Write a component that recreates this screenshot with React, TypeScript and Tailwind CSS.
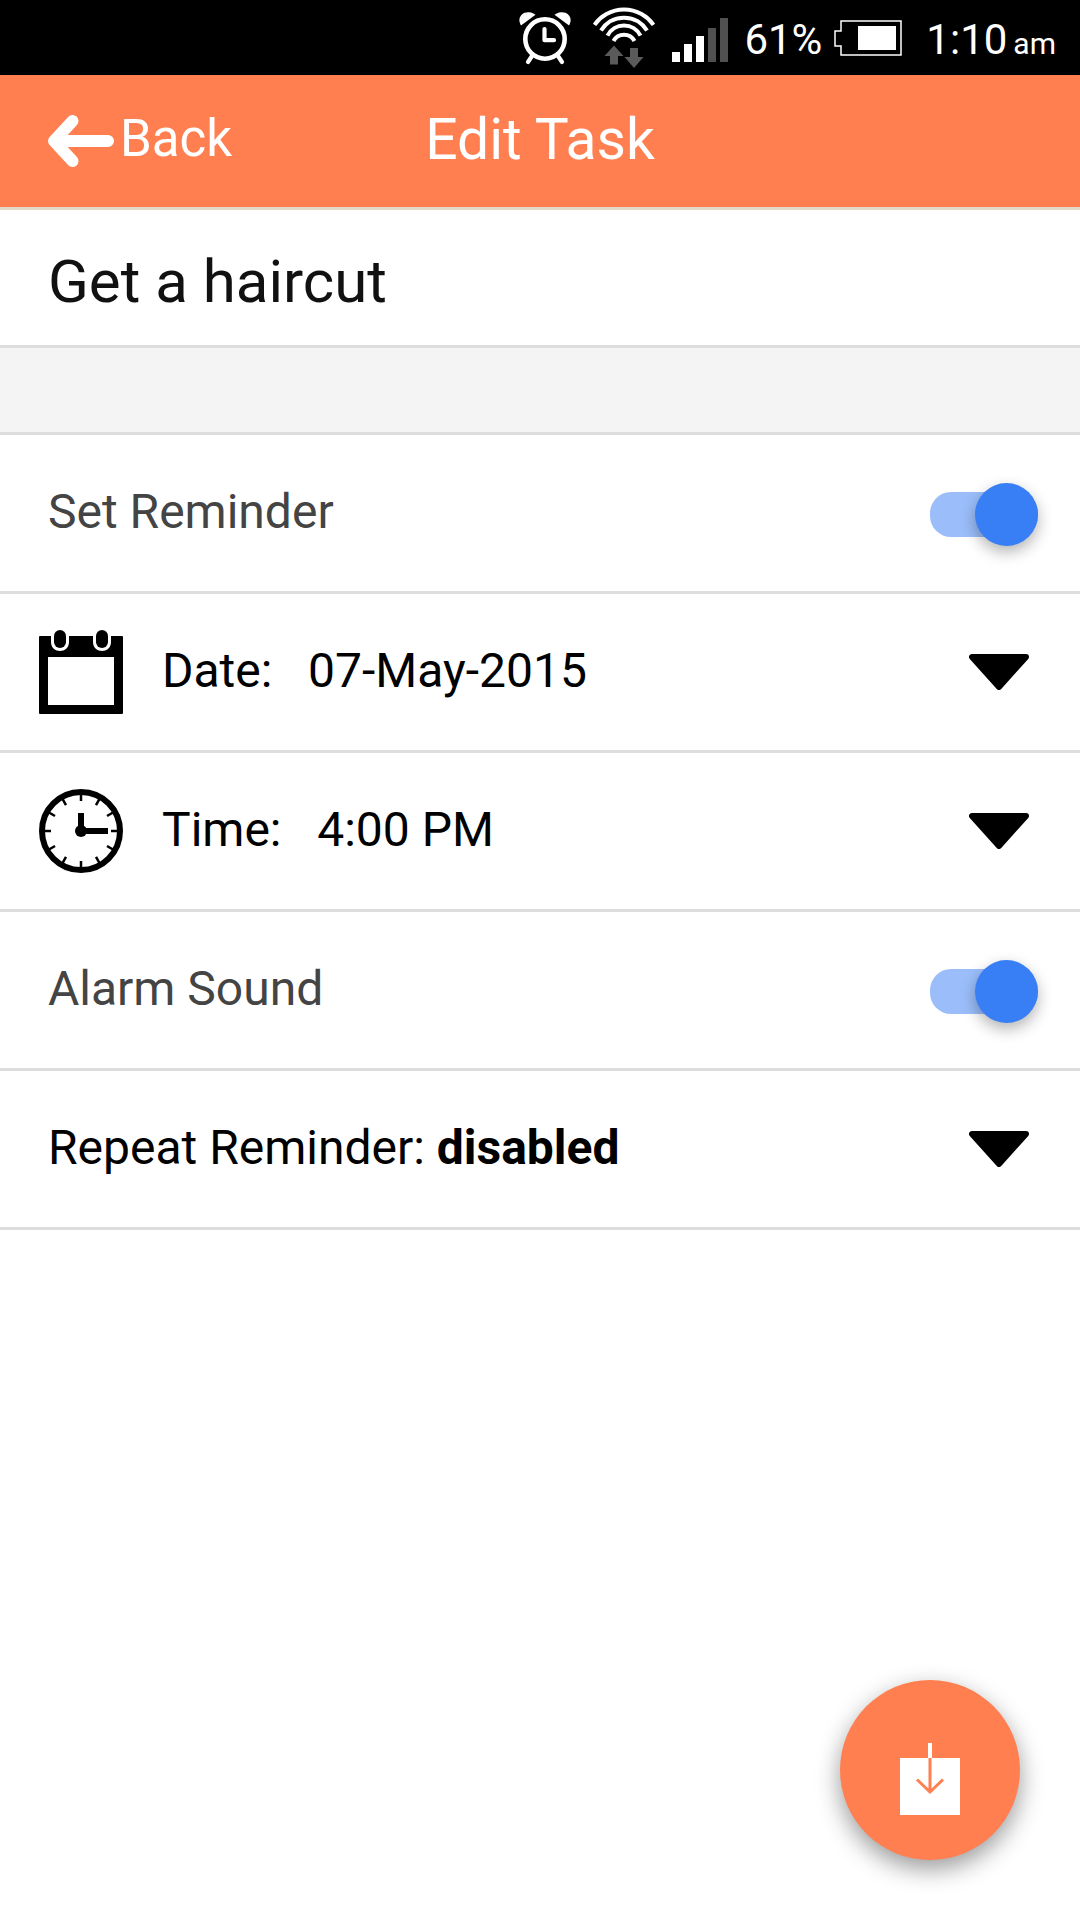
import { useState } from "react"
import type { ReactNode } from "react"

function AlarmIcon() {
    return (
        <svg width="54" height="56" viewBox="517 9 54 56" fill="none">
            <path
                d="M520 24.500C515.500 17 521 10.500 528 11.200C531 11.500 533 12.500 534.500 13.800Z"
                fill="#fff"
            />
            <path
                d="M568 24.500C572.500 17 567 10.500 560 11.200C557 11.500 555 12.500 553.500 13.800Z"
                fill="#fff"
            />
            <circle cx="544" cy="38" r="19.700" stroke="#fff" strokeWidth="4.600" />
            <path
                d="M543.500 28V39.200H553M531 55L527 61M557 55L561 61"
                stroke="#fff"
                strokeWidth="4.200"
                strokeLinecap="round"
                strokeLinejoin="round"
            />
        </svg>
    )
}

function WifiIcon() {
    return (
        <svg width="64" height="64" viewBox="592 6 64 64" fill="none">
            <path
                d="M594.500 24.800A36.200 36.200 0 0 1 653.500 24.800M601 30.500A27 27 0 0 1 647 30.500M607.500 35.700A18.500 18.500 0 0 1 640.500 35.700M613.500 41A12 12 0 0 1 634.500 41"
                stroke="#fff"
                strokeWidth="4"
            />
            <path
                d="M614 45.500L623.500 56H618V64.500H610V56H604.500ZM630 48H638V57H643.500L634 68L624.500 57H630Z"
                fill="#5a5a5a"
            />
        </svg>
    )
}

function SignalIcon() {
    return (
        <svg width="56" height="44" viewBox="0 0 56 44">
            <path d="M0 34h8v10H0zM12 26h8v18h-8zM24 18h8v26h-8z" fill="#fff" />
            <path d="M36 10h8v34h-8zM48 0h8v44h-8z" fill="#505050" />
        </svg>
    )
}

function BatteryIcon() {
    return (
        <svg width="68" height="36" viewBox="0 0 68 36" fill="none">
            <path
                d="M7 1H67V35H7V26H1V11H7Z"
                stroke="#fff"
                strokeWidth="1.500"
            />
            <path d="M24 6h38v24H24z" fill="#fff" />
        </svg>
    )
}

function BackIcon() {
    return (
        <svg width="66" height="54" viewBox="0 0 66 54" fill="none">
            <path
                d="M60 27H7M24.500 7L6 27L24.500 47"
                stroke="#fff"
                strokeWidth="12"
                strokeLinecap="round"
                strokeLinejoin="round"
            />
        </svg>
    )
}

function CalendarIcon() {
    return (
        <svg width="84" height="84" viewBox="0 0 84 84">
            <path
                fillRule="evenodd"
                d="M1 6H12V12C12 24 30 24 30 12V6H54V12C54 24 72 24 72 12V6H83Q84 6 84 7V83Q84 84 83 84H1Q0 84 0 83V7Q0 6 1 6ZM9 27V75H75V27Z"
            />
            <rect x="15" y="0" width="12" height="18" rx="6" />
            <rect x="57" y="0" width="12" height="18" rx="6" />
        </svg>
    )
}

const ticks = [0, 30, 60, 90, 120, 150, 180, 210, 240, 270, 300, 330]

function ClockIcon() {
    return (
        <svg width="84" height="84" viewBox="0 0 84 84" fill="none" stroke="#000">
            <circle cx="42" cy="42" r="39" strokeWidth="6" />
            {ticks.map((angle) => (
                <path
                    key={angle}
                    d="M42 5V12"
                    strokeWidth="2.500"
                    transform={`rotate(${angle} 42 42)`}
                />
            ))}
            <path d="M42 24V42H69" strokeWidth="6" />
            <circle cx="42" cy="42" r="6" fill="#000" stroke="none" />
        </svg>
    )
}

function CaretIcon() {
    return (
        <svg width="60" height="36" viewBox="0 0 60 36">
            <path
                d="M3 3H57L30 33Z"
                fill="#000"
                stroke="#000"
                strokeWidth="6"
                strokeLinejoin="round"
            />
        </svg>
    )
}

function SaveIcon() {
    return (
        <svg width="60" height="90" viewBox="0 0 60 90" fill="none">
            <path d="M0 33h60v57H0z" fill="#fff" />
            <path d="M30 18V33" stroke="#fff" strokeWidth="4" />
            <path
                d="M30 33V67M17 54.500L30 67L43 54.500"
                stroke="#ff7f50"
                strokeWidth="3"
            />
        </svg>
    )
}

function StatusBar() {
    return (
        <div className="flex h-[75px] items-center justify-end bg-black pr-6 text-[42px] leading-none text-white">
            <AlarmIcon />
            <div className="ml-5">
                <WifiIcon />
            </div>
            <div className="mt-1 ml-4">
                <SignalIcon />
            </div>
            <span className="mt-1 ml-4">61%</span>
            <div className="ml-3">
                <BatteryIcon />
            </div>
            <div className="mt-1 ml-6 flex items-baseline gap-1.5">
                <span>1:10</span>
                <span className="text-[30px]">am</span>
            </div>
        </div>
    )
}

function SwitchRow({ label }: { label: string }) {
    const [on, setOn] = useState(true)

    return (
        <label className="flex h-[159px] items-center justify-between border-b-3 border-[#ddd] pr-[42px] pl-12 text-[#444]">
            <span className="pb-0.5">{label}</span>
            <input
                type="checkbox"
                checked={on}
                onChange={(event) => setOn(event.target.checked)}
                className="mt-0.5 flex h-[45px] w-[108px] appearance-none items-center rounded-[21px] bg-gray-300 before:size-[63px] before:shrink-0 before:rounded-full before:bg-white before:shadow-[0_6px_15px_rgba(0,0,0,0.3)] before:content-[''] checked:justify-end checked:bg-[#9bbefa] checked:before:bg-[#387ef5]"
            />
        </label>
    )
}

function PickerRow({
    icon,
    children,
}: {
    icon?: ReactNode
    children: ReactNode
}) {
    return (
        <button
            type="button"
            className="flex h-[159px] w-full items-center border-b-3 border-[#ddd] pr-[51px] text-left text-black"
        >
            {icon && <span className="-mr-[9px] ml-[39px]">{icon}</span>}
            <span className="ml-12 flex-1 pb-0.5 whitespace-pre">{children}</span>
            <CaretIcon />
        </button>
    )
}

export default function App() {
    const [title, setTitle] = useState("Get a haircut")

    return (
        <div className="min-h-screen bg-white font-['Roboto',sans-serif] text-[48px] leading-[60px]">
            <StatusBar />

            <header className="grid h-[135px] grid-cols-[1fr_auto_1fr] items-center border-b-3 border-[#e3d9c8] bg-[#ff7f50] px-12 text-white">
                <button type="button" className="flex items-center gap-1.5 text-[51px]">
                    <BackIcon />
                    <span className="pb-1">Back</span>
                </button>
                <h1 className="pb-0.5 text-[57px]">Edit Task</h1>
            </header>

            <main>
                <input
                    type="text"
                    aria-label="Task"
                    value={title}
                    onChange={(event) => setTitle(event.target.value)}
                    className="block h-[138px] w-full border-b-3 border-[#ddd] px-12 pt-2 text-[60px] text-[#111] outline-none"
                />
                <div className="h-[87px] border-b-3 border-[#ddd] bg-[#f4f4f4]" />

                <SwitchRow label="Set Reminder" />
                <PickerRow icon={<CalendarIcon />}>Date:   07-May-2015</PickerRow>
                <PickerRow icon={<ClockIcon />}>Time:   4:00 PM</PickerRow>
                <SwitchRow label="Alarm Sound" />
                <PickerRow>
                    Repeat Reminder: <b>disabled</b>
                </PickerRow>
            </main>

            <button
                type="button"
                aria-label="Save task"
                className="fixed right-[60px] bottom-[60px] flex size-[180px] items-center justify-center rounded-full bg-[#ff7f50] shadow-[0_9px_24px_rgba(0,0,0,0.4)]"
            >
                <SaveIcon />
            </button>
        </div>
    )
}
